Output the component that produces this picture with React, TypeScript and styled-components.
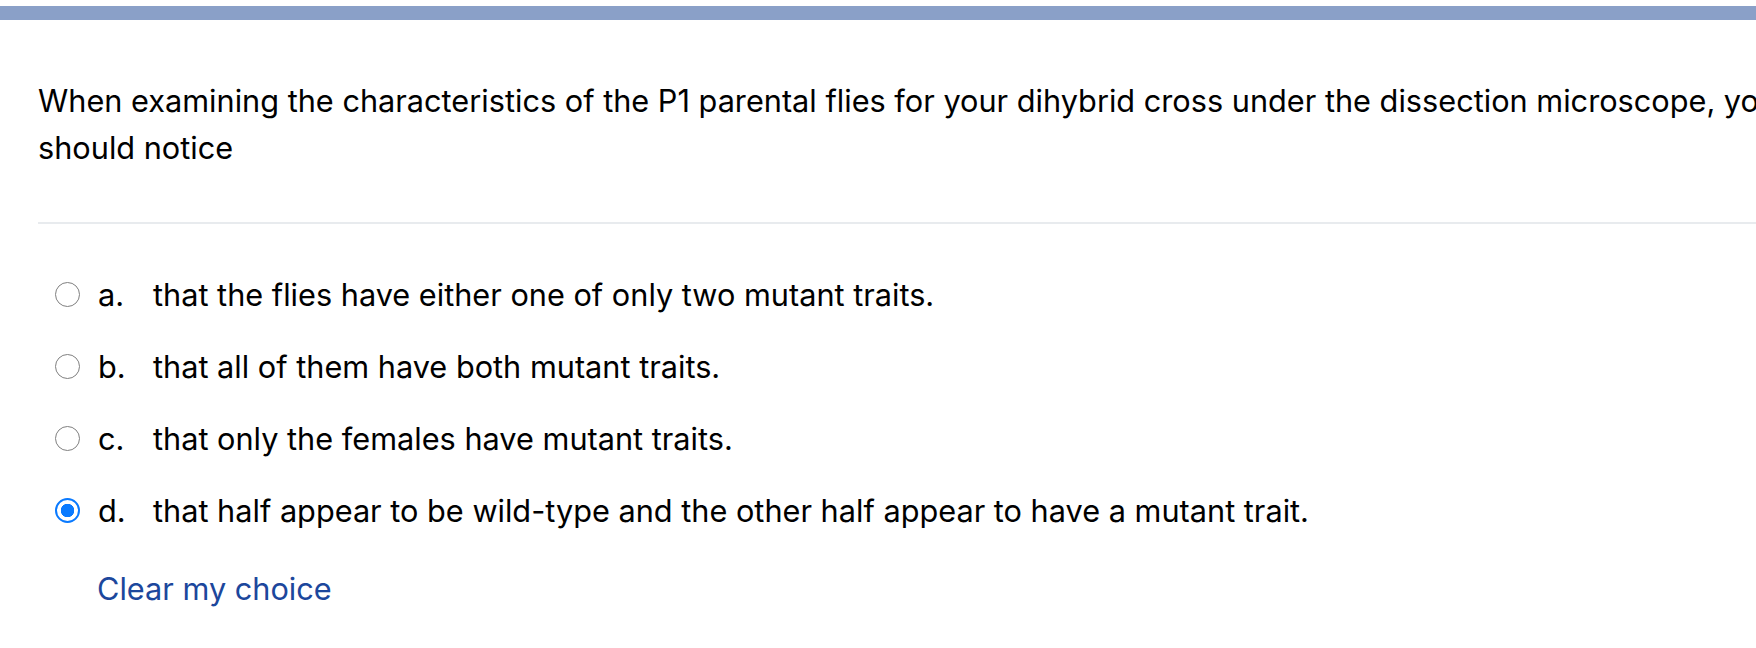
import React from "react";
import styled, { createGlobalStyle } from "styled-components";

const Global = createGlobalStyle`
  html, body { margin: 0; padding: 0; background: #fff; overflow: hidden; }
  body { font-family: Inter, "Liberation Sans", sans-serif; color: #000; }
`;

const Page = styled.div`
  width: 1756px;
  height: 648px;
  overflow: hidden;
  padding-top: 6px;
  box-sizing: border-box;
`;

const TopBar = styled.div`
  height: 14px;
  background: #8aa0c8;
`;

const Content = styled.div`
  padding: 57px 0 0 38px;
  width: 1800px;
`;

const Question = styled.p`
  margin: 0;
  font-size: 30.7px;
  line-height: 47px;
  padding-bottom: 51px;
  border-bottom: 2px solid #e8ebee;
`;

const Answers = styled.div`
  display: flex;
  flex-direction: column;
  padding-top: 34px;
`;

const Option = styled.label`
  display: flex;
  align-items: center;
  height: 72px;
  font-size: 30.7px;
  padding-left: 17px;
`;

const Radio = styled.span<{ $checked?: boolean }>`
  width: 25px;
  height: 25px;
  box-sizing: border-box;
  border-radius: 50%;
  flex: none;
  margin-right: 18px;
  border: ${(p) => (p.$checked ? "2px solid #0a7aff" : "1.8px solid #7f7f7f")};
  background: ${(p) => (p.$checked ? "radial-gradient(circle, #0a7aff 0 6.5px, #fff 7px)" : "#fff")};
`;

const Letter = styled.span`
  width: 55px;
  flex: none;
`;

const Text = styled.span``;

const ClearLink = styled.a`
  display: block;
  margin-left: 59px;
  margin-top: 24px;
  font-size: 30.7px;
  color: #1c479c;
  text-decoration: none;
`;

const options = [
  { l: "a.", t: "that the flies have either one of only two mutant traits." },
  { l: "b.", t: "that all of them have both mutant traits." },
  { l: "c.", t: "that only the females have mutant traits." },
  { l: "d.", t: "that half appear to be wild-type and the other half appear to have a mutant trait.", c: true },
];

export default function App() {
  return (
    <Page>
      <Global />
      <TopBar />
      <Content>
        <Question>
          When examining the characteristics of the P1 parental flies for your dihybrid cross under the dissection microscope, you should notice
        </Question>
        <Answers>
          {options.map((o) => (
            <Option key={o.l}>
              <Radio $checked={o.c} />
              <Letter>{o.l}</Letter>
              <Text>{o.t}</Text>
            </Option>
          ))}
          <ClearLink href="#">Clear my choice</ClearLink>
        </Answers>
      </Content>
    </Page>
  );
}
